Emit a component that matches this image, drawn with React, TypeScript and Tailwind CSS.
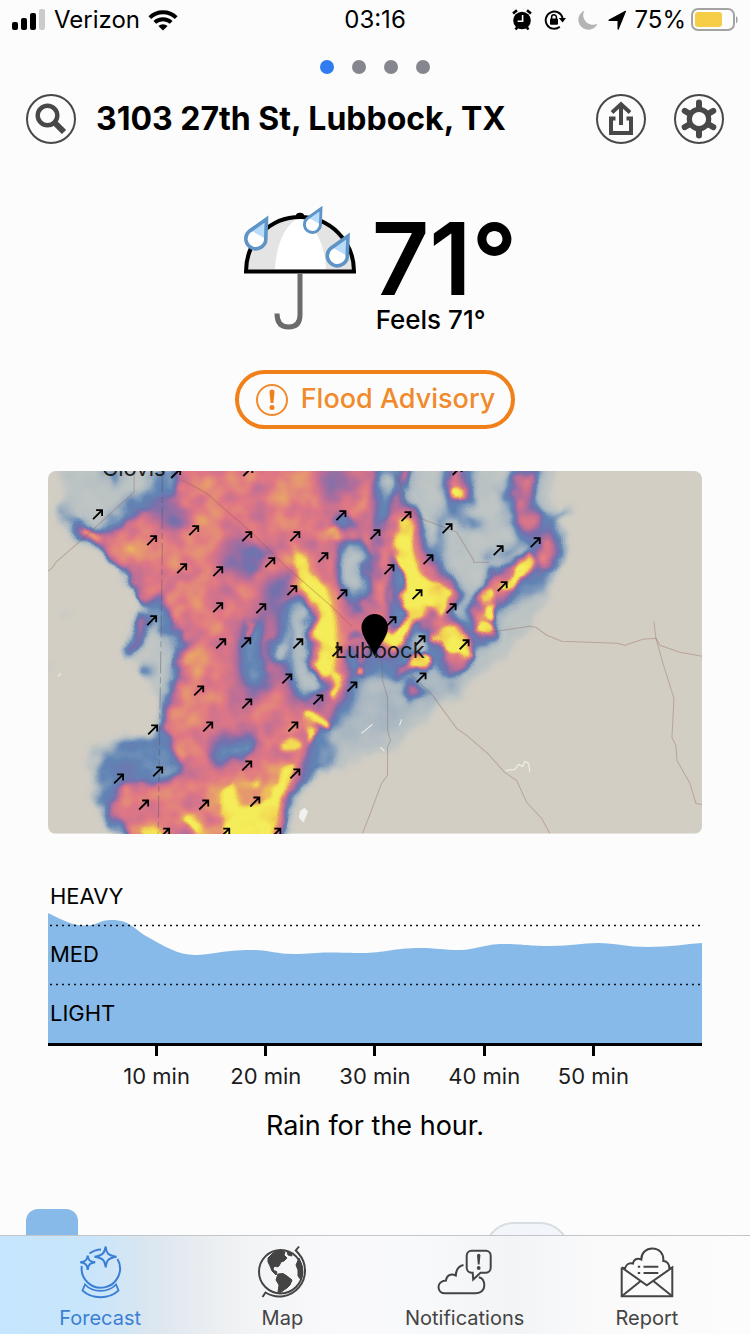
import React from 'react';

const arrows: [number, number][] = [
  [50, 43], [128, 2], [200, 0], [104, 69], [146, 59], [199, 65], [247, 65], [293, 44], [327, 63],
  [134, 97], [170, 100], [222, 91], [275, 86], [244, 119], [294, 123], [104, 149], [170, 136],
  [213, 137], [173, 172], [198, 171], [250, 172], [289, 180], [239, 207], [304, 215], [151, 219],
  [199, 232], [270, 228], [105, 258], [160, 255], [245, 255], [199, 294], [247, 302], [71, 307],
  [110, 300], [207, 330], [96, 333], [156, 333], [117, 361], [177, 361], [228, 361], [358, 45],
  [399, 57], [450, 79], [487, 71], [380, 88], [341, 98], [454, 115], [369, 123], [403, 137],
  [343, 150], [372, 169], [416, 173], [373, 206], [409, -1],
];

const roads = [
  'M441 161L454 159L481 155L487 156L498 164L513 170L568 172L576 174L594 168L607 167L611 174L631 181L653 185',
  'M605 150L607 167L614 192L625 227L623 266L627 274L628 289L641 312L647 332L653 333',
  'M361 202L384 224L408 257L418 264L439 282L456 301L468 309L478 331L493 347L501 362',
  'M333 189L334 209L339 226L339 259L342 269L339 276L339 304L333 312L321 344L314 362',
  'M0 100L4 97L8 91L31 71L86 21L86 2',
  'M134 9L158 22L204 62L238 96L284 136L304 156',
  'M346 0L354 19L357 32L371 47L408 61L425 89V91H441',
];

const minutes = [10, 20, 30, 40, 50];

const StatusBar: React.FC = () => (
  <div className="grid h-10 grid-cols-[1fr_auto_1fr] items-center px-3 text-2xl text-black">
    <div className="flex items-center gap-2">
      <svg width="34" height="22" viewBox="0 0 34 22">
        <rect x="0" y="13" width="6" height="8" rx="2" />
        <rect x="9" y="9" width="6" height="12" rx="2" />
        <rect x="18" y="4" width="6" height="17" rx="2" />
        <rect x="27" y="0" width="6" height="21" rx="2" fill="#cbcbcb" />
      </svg>
      <span>Verizon</span>
      <svg width="30" height="22" viewBox="0 0 30 22" fill="none" stroke="#000" strokeWidth="4">
        <path d="M1.8 8.6a19 19 0 0 1 26.4 0" />
        <path d="M6.8 13.4a12 12 0 0 1 16.4 0" />
        <path d="M15 21.5l-4.6-4.6a7 7 0 0 1 9.2 0z" fill="#000" stroke="none" />
      </svg>
    </div>
    <span>03:16</span>
    <div className="flex items-center justify-end">
      <svg className="mr-3" width="20" height="22" viewBox="0 0 20 22">
        <circle cx="10" cy="11.5" r="8.8" />
        <path d="M1 4.5L5 1.2M19 4.5L15 1.2M3.5 20.5l2-2.5M16.5 20.5l-2-2.5" stroke="#000" strokeWidth="2.6" />
        <path d="M10.6 6v6.2H5.6" stroke="#fff" strokeWidth="1.6" fill="none" />
      </svg>
      <svg className="mr-3" width="22" height="22" viewBox="0 0 22 22">
        <path d="M15.8 17.8A8.6 8.6 0 1 1 18.6 9" fill="none" stroke="#000" strokeWidth="1.9" />
        <path d="M14.8 9h7.2l-3.4 4.6z" />
        <rect x="6" y="9.5" width="8" height="6.2" rx="1" />
        <path d="M7.6 10V8.2a2.4 2.4 0 0 1 4.8 0V10" fill="none" stroke="#000" strokeWidth="1.5" />
      </svg>
      <svg className="mr-2" width="20" height="22" viewBox="0 0 20 22">
        <path d="M6.5 1.5A10 10 0 1 0 19.6 14.6 9.6 9.6 0 0 1 6.5 1.5z" fill="#b4b4b4" />
      </svg>
      <svg className="mr-[6px]" width="22" height="22" viewBox="0 0 22 22">
        <path d="M20 2.4L12.8 20.2c-.4.9-1.3.7-1.3-.2V11.9H3.2c-1 0-1.2-1-.2-1.4L18.8 2c.8-.4 1.5-.2 1.2.4z" />
      </svg>
      <span>75%</span>
      <svg className="ml-1" width="48" height="24" viewBox="0 0 48 24">
        <rect x="2" y="1" width="42" height="21" rx="6" fill="none" stroke="#a3a3a3" strokeWidth="2" />
        <rect x="5" y="4" width="27" height="15" rx="3" fill="#f6cd47" />
        <path d="M46 8v7.500c2.200-1.400 2.200-6.100 0-7.500z" fill="#a3a3a3" />
      </svg>
    </div>
  </div>
);

const Header: React.FC = () => (
  <header className="flex h-[50px] items-center px-[26px]">
    <button aria-label="Search" className="flex size-[50px] shrink-0 items-center justify-center rounded-full border-2 border-[#484848]">
      <svg width="32" height="32" viewBox="0 0 32 32" fill="none" stroke="#484848">
        <circle cx="12.500" cy="12.500" r="9.800" strokeWidth="4.400" />
        <path d="M20 20l9 9" strokeWidth="6" />
      </svg>
    </button>
    <h1 className="ml-5 flex-1 truncate text-[32px] font-bold leading-10">3103 27th St, Lubbock, TX</h1>
    <div className="flex gap-7">
      <button aria-label="Share" className="flex size-[50px] items-center justify-center rounded-full border-2 border-[#484848]">
        <svg width="30" height="38" viewBox="0 0 30 38" fill="none" stroke="#484848" strokeWidth="4">
          <path d="M9.500 18.500H5V33H25V18.500H20.500" />
          <path d="M15 25V5" />
          <path d="M6 12.500L15 4L24 12.500" strokeWidth="3.800" />
        </svg>
      </button>
      <button aria-label="Settings" className="flex size-[50px] items-center justify-center rounded-full border-2 border-[#484848]">
        <svg width="40" height="40" viewBox="0 0 40 40" fill="none" stroke="#484848">
          <circle cx="20" cy="20" r="9.700" strokeWidth="5.200" />
          <path
            d="M20 8.500V3.500M20 31.500V36.500M10 14.300L5.700 11.800M30 25.700L34.300 28.200M10 25.700L5.700 28.200M30 14.300L34.300 11.800"
            strokeWidth="6"
            strokeLinecap="round"
          />
        </svg>
      </button>
    </div>
  </header>
);

const Drop: React.FC<{ x: number; y: number; scale: number }> = ({ x, y, scale }) => (
  <g transform={`translate(${x} ${y}) scale(${scale})`}>
    <path d="M22.500 2L21.800 21A10 10 0 1 1 5 14.500Z" fill="#fff" />
    <path d="M22.500 2L21.800 22L7 13.500Z" fill="#b9dcfb" />
    <path d="M22.500 2L21.800 21A10 10 0 1 1 5 14.500Z" fill="none" stroke="#5f94c6" strokeWidth="3.600" />
  </g>
);

const Umbrella: React.FC = () => (
  <svg width="118" height="126" viewBox="0 0 118 126">
    <path d="M4 65a54 54 0 0 1 108 0z" fill="#e4e4e4" />
    <path d="M33 63C34 40 42 20 56 12H60C74 20 83 40 84 63z" fill="#fff" />
    <path d="M4 65.500C4 35 28 11 58 11s54 24 54 54.500z" fill="none" stroke="#000" strokeWidth="4" />
    <ellipse cx="58" cy="9.500" rx="4" ry="2.800" />
    <path d="M58 67.500V109c0 8-4 12-11.500 12S35 117 35 107.500" fill="none" stroke="#6b6b6b" strokeWidth="5" />
    <Drop x={2} y={11} scale={1} />
    <Drop x={61} y={1} scale={0.8} />
    <Drop x={83.500} y={28} scale={1} />
  </svg>
);

const RadarMap: React.FC = () => (
  <svg className="block h-auto w-full rounded-lg" viewBox="0 0 653 362">
    <defs>
      {/* grey levels are rain intensity, the filter turns them into the radar colours */}
      <filter id="radar" x="0" y="0" width="653" height="362" filterUnits="userSpaceOnUse" colorInterpolationFilters="sRGB">
        <feTurbulence type="fractalNoise" baseFrequency="0.045" numOctaves="2" seed="7" result="noise" />
        <feDisplacementMap in="SourceGraphic" in2="noise" scale="14" xChannelSelector="R" yChannelSelector="G" result="moved" />
        <feColorMatrix in="noise" values="1 0 0 0 0  1 0 0 0 0  1 0 0 0 0  0 0 0 0 1" result="grey" />
        <feComposite in="moved" in2="grey" operator="arithmetic" k1="0.4" k2="0.8" />
        <feColorMatrix values="1 0 0 0 0  1 0 0 0 0  1 0 0 0 0  1 0 0 0 0" />
        <feComponentTransfer>
          <feFuncR type="table" tableValues="0.72 0.72 0.70 0.60 0.38 0.46 0.72 0.88 0.91 0.95 0.96" />
          <feFuncG type="table" tableValues="0.76 0.76 0.75 0.68 0.52 0.44 0.43 0.47 0.62 0.84 0.93" />
          <feFuncB type="table" tableValues="0.78 0.78 0.77 0.75 0.71 0.68 0.60 0.52 0.42 0.32 0.35" />
          <feFuncA type="table" tableValues="0 0.15 0.65 0.85 1 1 1 1 1 1 1" />
        </feComponentTransfer>
      </filter>
      <filter id="b2" x="-20%" y="-20%" width="140%" height="140%"><feGaussianBlur stdDeviation="2" /></filter>
      <filter id="b4" x="-20%" y="-20%" width="140%" height="140%"><feGaussianBlur stdDeviation="4" /></filter>
      <filter id="b8" x="-40%" y="-40%" width="180%" height="180%"><feGaussianBlur stdDeviation="8" /></filter>
    </defs>
    <rect width="653" height="362" fill="#d3cec4" />
    <g filter="url(#radar)">
      <rect x="-20" y="-20" width="693" height="402" fill="#000" />
      {/* drizzle */}
      <g filter="url(#b4)" fill="#343434">
        <path d="M10 -10L14 40L60 60L130 30V-10z" />
        <path d="M100 120L92 200L120 250L140 200V120z" />
        <path d="M300 -10H510L505 20L512 65L500 130L478 165L440 200L415 225L385 245L350 275L320 285L296 300L276 290L290 240z" />
        <path d="M40 270L100 260L130 310L70 362H62L42 330z" />
        <circle cx="18" cy="143" r="6" />
        <circle cx="2" cy="197" r="6" />
      </g>
      <g filter="url(#b8)" fill="#464646">
        <path d="M300 215L390 205L440 185L380 235L330 265L285 275z" />
      </g>
      {/* light rain */}
      <g filter="url(#b4)" fill="#666" stroke="#666" strokeLinejoin="round" strokeLinecap="round">
        <path
          d="M112 0L96 22L80 32L66 48L50 60L40 54L22 48L14 34L20 60L50 76L71 98L91 118L99 136L108 150L122 170L132 190L122 216L116 240L108 262L75 276L54 282L52 300L55 345L72 362H236L246 322L266 304L272 268L300 240L312 206L345 200L350 -10z"
          strokeWidth="7"
        />
        <path d="M52 -4L66 18L76 0z" />
        <path d="M95 145L82 180" strokeWidth="16" />
        <circle cx="98" cy="199" r="8" />
        <path d="M330 0L350 10L366 60L385 90L405 115L400 140L425 170L410 192L380 196L362 205L330 200z" strokeWidth="9" />
        <path d="M410 -4L408 24M475 4L468 24L484 60M498 66V84L480 110L454 120L436 130L431 160" strokeWidth="34" fill="none" />
        <path d="M391 50V92M371 218L378 222M505 48L520 38M440 84L470 76M400 44L432 54" strokeWidth="10" fill="none" />
        <ellipse cx="402" cy="214" rx="6" ry="4" />
        <ellipse cx="272" cy="282" rx="16" ry="20" />
      </g>
      {/* steady rain */}
      <g filter="url(#b4)" fill="#b0b0b0" stroke="#b0b0b0" strokeLinejoin="round" strokeLinecap="round">
        <path
          d="M132 -10L126 26L101 40L76 54L61 65L41 60L25 51L32 63L54 76L74 98L92 117L99 130L108 121L118 131L128 152L140 170L137 192L128 218L123 238L118 258L128 272L132 300L114 312L83 312L68 326L60 340L74 349L78 372H226L234 326L252 306L262 262L284 240L294 226L300 200L316 186L322 150L326 -10z"
          strokeWidth="3"
        />
        <path d="M96 150L86 176" strokeWidth="7" />
        <path d="M356 44L340 64L334 110L332 150L340 176" strokeWidth="17" fill="none" />
        <path d="M356 48L366 90L385 112L400 124L378 140L394 156L412 178L406 190" strokeWidth="25" fill="none" />
        <path d="M368 191L352 198M358 -4V10M346 24V34" strokeWidth="10" fill="none" />
        <path d="M409 -4V8L405 22M409 8L417 24" strokeWidth="9" fill="none" />
        <path d="M466 12L484 4L474 34zM473 42L490 46L482 58z" strokeWidth="9" />
        <path d="M498 70V88M480 92L446 108L456 118L434 128L436 162" strokeWidth="17" fill="none" />
        <circle cx="364" cy="222" r="7" />
      </g>
      {/* breaks in the rain */}
      <g filter="url(#b8)" fill="#7d7d7d">
        <ellipse cx="194" cy="88" rx="22" ry="18" />
        <ellipse cx="205" cy="190" rx="15" ry="42" />
        <ellipse cx="184" cy="272" rx="28" ry="14" transform="rotate(-25 184 272)" />
        <ellipse cx="286" cy="10" rx="16" ry="14" />
        <ellipse cx="228" cy="128" rx="14" ry="26" />
        <ellipse cx="122" cy="44" rx="20" ry="12" />
        <path d="M236 130H262L268 225L300 226L262 240L236 212z" />
      </g>
      <g filter="url(#b4)" fill="#626262">
        <ellipse cx="205" cy="182" rx="12" ry="34" />
        <ellipse cx="184" cy="278" rx="22" ry="9" transform="rotate(-20 184 278)" />
        <path d="M240 128L258 128L264 160L270 222L248 224L240 200L226 175z" />
        <path d="M290 72L316 68L322 126L302 138L290 110z" />
        <ellipse cx="293" cy="50" rx="8" ry="8" />
        <ellipse cx="108" cy="296" rx="20" ry="12" />
        <ellipse cx="304" cy="188" rx="8" ry="12" />
      </g>
      <g filter="url(#b4)" fill="#343434">
        <path d="M246 136H254L258 168L264 218L252 220L248 180z" stroke="#343434" strokeWidth="2" />
        <ellipse cx="304" cy="98" rx="10" ry="23" />
        <ellipse cx="230" cy="178" rx="6" ry="10" />
        <ellipse cx="338" cy="12" rx="7" ry="9" />
        <ellipse cx="122" cy="180" rx="6" ry="14" />
        <ellipse cx="372" cy="172" rx="7" ry="9" />
      </g>
      <g filter="url(#b2)" fill="#858585">
        <ellipse cx="344" cy="124" rx="5" ry="10" />
        <circle cx="307" cy="166" r="6" />
      </g>
      {/* heavier */}
      <g filter="url(#b8)" fill="#c4c4c4">
        <ellipse cx="158" cy="35" rx="16" ry="16" />
        <ellipse cx="92" cy="80" rx="24" ry="12" />
        <ellipse cx="138" cy="238" rx="17" ry="20" />
        <ellipse cx="146" cy="105" rx="11" ry="56" />
        <ellipse cx="152" cy="190" rx="14" ry="24" />
        <ellipse cx="247" cy="16" rx="20" ry="12" />
        <ellipse cx="147" cy="290" rx="8" ry="20" />
        <ellipse cx="214" cy="12" rx="10" ry="8" />
      </g>
      <g filter="url(#b2)" fill="#d0d0d0" stroke="#d0d0d0" strokeLinecap="round">
        <path d="M34 57L50 67" strokeWidth="5" />
        <circle cx="286" cy="64" r="6" />
        <circle cx="312" cy="200" r="4" />
        <path d="M204 152L198 166" strokeWidth="4" />
      </g>
      {/* downpour */}
      <g filter="url(#b4)" fill="#ccc" stroke="#ccc" strokeLinejoin="round" strokeLinecap="round">
        <path d="M246 80L258 86L262 104L282 118L290 160L284 208L272 204L268 128L250 106z" strokeWidth="8" />
        <path d="M168 318L240 296L226 364H160z" strokeWidth="8" />
        <path d="M142 340L152 362M84 362H116" strokeWidth="14" />
      </g>
      <g filter="url(#b2)" fill="#fff" stroke="#fff" strokeLinejoin="round" strokeLinecap="round">
        <path d="M246 84L256 84L258 100L276 116L284 146L288 170L282 204L274 206L272 170L269 128L252 106z" strokeWidth="3" />
        <path d="M288 206L284 222M262 244L278 250M262 262V258M236 276L248 270" strokeWidth="8" fill="none" />
        <path d="M172 322L184 316L190 338L208 336L226 326L236 300L246 296L234 322L226 340L222 372H184L172 345z" strokeWidth="2" />
        <path d="M206 310V311M142 346L150 358M96 361H110" strokeWidth="7" fill="none" />
        <path d="M356 50L345 68L354 90L362 112L356 138L360 152L370 142L376 130L392 138L400 120L386 112L372 108L362 80L360 60z" strokeWidth="6" />
        <path d="M338 168L346 172L356 158M364 190L376 191" strokeWidth="13" fill="none" />
        <path d="M390 164L402 158L418 182L398 176z" strokeWidth="8" />
        <path d="M409 22V23M478 90L472 100M466 108L460 112M432 126L440 124M442 138V142M435 160L438 156" strokeWidth="11" fill="none" />
      </g>
    </g>
    <g fill="none" stroke="#8a5a50" strokeOpacity="0.35">
      {roads.map((d) => (
        <path key={d} d={d} />
      ))}
    </g>
    <path d="M114 0V89L110 362" fill="none" stroke="#4b4b5f" strokeOpacity="0.4" strokeDasharray="22 4 6 4" />
    <g fill="none" stroke="#f1f1ee">
      <path d="M457 299L466 298L470 293L474 295L476 290L480 292L481 301" />
      <path d="M313 262L324 253M351 254L353 248M332 276L336 280M10 205L13 202" />
      <path d="M252 340L256 337L259 340L255 350L251 346z" fill="#f1f1ee" />
    </g>
    <g fill="none" stroke="#000" strokeWidth="1.800">
      {arrows.map(([x, y]) => (
        <path key={`${x}-${y}`} d={`M${x - 5} ${y + 5}L${x + 4} ${y - 4}M${x - 2} ${y - 4}H${x + 4}V${y + 2}`} />
      ))}
    </g>
    <g fontSize="22" fill="#1a1a1a">
      <text x="54" y="5">Clovis</text>
      <text x="286" y="187">Lubbock</text>
    </g>
    <path d="M326 185C322 174 313 166 313 156a13.200 13.200 0 0 1 26.400 0C339.400 166 330 174 326 185z" />
  </svg>
);

const RainChart: React.FC = () => (
  <section className="mx-12 mt-[33px]">
    <div className="grid border-b-[3px] border-black">
      <svg className="col-start-1 row-start-1 h-[176px] w-full" viewBox="0 0 654 176" preserveAspectRatio="none">
        <path
          d="M0 46C16 54 24 58 36 58.500C50 59 50 53 64 53C82 53 86 62 98 69C116 79 130 88 147 88C162 88 176 83 203 83C222 83 228 87 245 87C262 87 268 85.500 280 85.500C296 85.500 302 86 314 86C336 86 346 81 372 81C388 81 396 83 410 83C430 83 434 77 456 77C474 77 480 79 502 79C524 79 534 76 550 76C568 76 578 80 600 80C622 80 638 77 654 76V176H0z"
          fill="#87bae8"
        />
        <path d="M2 58.500H654M2 117.500H654" stroke="#111" strokeWidth="1.400" strokeDasharray="2 4" />
      </svg>
      <div className="col-start-1 row-start-1 grid grid-rows-3 pl-[2px] text-[22px] leading-[58px]">
        <span>HEAVY</span>
        <span>MED</span>
        <span>LIGHT</span>
      </div>
    </div>
    <div className="grid grid-cols-5 px-[54px]">
      {minutes.map((m) => (
        <div key={m} className="flex flex-col items-center text-[22px] leading-8 text-[#1c1c1c]">
          <div className="mb-1 h-[10px] w-[3px] bg-black" />
          <span>{m} min</span>
        </div>
      ))}
    </div>
  </section>
);

const ForecastIcon: React.FC = () => (
  <svg width="48" height="56" viewBox="0 0 48 56" fill="none" stroke="currentColor" strokeWidth="2">
    <path d="M5.800 22A19.200 19.200 0 1 0 41.500 15" />
    <path d="M13.500 9.500A20 20 0 0 1 25 5.500" />
    <path d="M29.700 2.500C30.500 9.500 32 11.500 40.500 12.700C32.500 14 30.500 16 29.700 23.300C28.500 16 27 14 18.500 12.700C26.500 11.500 28.500 9.500 29.700 2.500z" />
    <path d="M11.700 11.500C12.200 16 13.700 17.700 19.200 18.300C14 19 12.300 20.500 11.700 25.800C11 20.500 9.500 19 4.200 18.300C9.500 17.700 11.200 16 11.700 11.500z" />
    <path d="M9 40.500L6.500 46.500C16 55.500 33 55.500 42.500 46.500L40 40.500C32 49 17 49 9 40.500z" strokeWidth="1.800" />
  </svg>
);

const MapIcon: React.FC = () => (
  <svg width="52" height="56" viewBox="0 0 52 56" fill="none" stroke="currentColor" strokeWidth="2">
    <circle cx="24.700" cy="27.700" r="21.700" />
    <path d="M43 2.500L39.800 6.500L42.500 9.500A25.800 25.800 0 0 1 9.500 48.500L6.500 53" />
    <path
      d="M17 9L24 6L29 8L28 11L31 14L28 17L25 18L23 22L21 23L19 22L17 24L18 27L20 27L21 29L20 31L16 27L14 22L12 18L12 14zM31 7L35 9L36 12L32 11zM22 30L27 29.500L31 32L36 36L34 41L31 44L28 46L24 49L22 48L23 41L20 36zM43 14L46 22L46.500 29L45 36L42 32L42 26L40 21z"
      fill="currentColor"
      strokeWidth="1"
    />
  </svg>
);

const NotificationsIcon: React.FC = () => (
  <svg width="56" height="56" viewBox="0 0 56 56" fill="none" stroke="currentColor" strokeWidth="2">
    <path d="M26.500 21C22 22 19 26 18.800 31.500C14 29 9.500 31.500 9 36.500C4 37 1.500 40 1.500 43C1.500 47 4.500 49.300 8 49.300H39C44 49.300 47.300 46 47.300 41.500C47.300 37 45 34 41.800 33.300" />
    <path d="M35.700 28.700H34.500A5 5 0 0 1 29.700 24V11.500A5 5 0 0 1 34.500 6.700H49A5 5 0 0 1 53.700 11.500V24A5 5 0 0 1 49 28.700H43.500L36.200 35.500z" />
    <path d="M40 11.500a1.700 1.700 0 0 1 3.400 0L42.600 20.500h-1.800z" fill="currentColor" stroke="none" />
    <circle cx="41.700" cy="24" r="1.900" fill="currentColor" stroke="none" />
  </svg>
);

const ReportIcon: React.FC = () => (
  <svg width="54" height="56" viewBox="0 0 54 56" fill="none" stroke="currentColor" strokeWidth="2">
    <path d="M1.700 23.500V52.300H52.300V23.500L26.800 41.200L1.700 23.500L5 24.500C6 20.500 9.500 18.700 13 19.500C13.500 15.500 17 13.500 21.300 15.500C21.300 9 26 4.500 32.300 4.500C39 4.500 44 9.500 43.300 17C47 17 49.500 20 49.300 24.300L52.300 23.500" />
    <path d="M2 52L20.700 37M52 52L33.300 37" />
    <path d="M23.500 22.700H38.300M23.500 29H38.300M17.800 22.700H20.200M17.800 29H20.200" />
  </svg>
);

const tabs = [
  { label: 'Forecast', icon: ForecastIcon, active: true },
  { label: 'Map', icon: MapIcon, active: false },
  { label: 'Notifications', icon: NotificationsIcon, active: false },
  { label: 'Report', icon: ReportIcon, active: false },
];

const TabBar: React.FC = () => (
  <nav className="border-t border-[#c2c4c7] bg-[linear-gradient(90deg,#c5e6fe_0%,#c8e5fb_12%,#dbe6ef_20%,#ebeef1_28%,#f3f4f5_34%,#f9f9fb_44%,#f8f9fa_56%,#f2f4f6_68%,#fafafb_80%,#fcfcfc_100%)] pl-[9px] pr-3 pt-2">
    <ul className="grid grid-cols-4">
      {tabs.map(({ label, icon: Icon, active }) => (
        <li key={label}>
          <a
            href="#"
            className={`flex h-[90px] flex-col items-center gap-[2px] text-xl leading-8 ${active ? 'text-[#3b7fd4]' : 'text-[#444]'}`}
          >
            <Icon />
            <span>{label}</span>
          </a>
        </li>
      ))}
    </ul>
  </nav>
);

const App: React.FC = () => {
  return (
    <div className="flex h-dvh flex-col bg-[#fcfcfc] font-['Inter','Liberation_Sans',sans-serif] text-black">
      <StatusBar />
      <main className="min-h-0 flex-1 overflow-y-auto [scrollbar-width:none]">
        <div className="flex justify-center gap-[18px] pb-5 pt-5">
          <span className="size-[14px] rounded-full bg-[#2f7bf0]" />
          <span className="size-[14px] rounded-full bg-[#86868e]" />
          <span className="size-[14px] rounded-full bg-[#86868e]" />
          <span className="size-[14px] rounded-full bg-[#86868e]" />
        </div>
        <Header />

        <section className="mt-[62px] flex justify-center gap-3 pl-[9px]">
          <Umbrella />
          <div className="pt-2">
            <p className="text-[100px] font-semibold leading-[90px]">71°</p>
            <p className="pl-1 text-[26px] font-medium leading-8">Feels 71°</p>
          </div>
        </section>

        <div className="mt-[34px] flex justify-center">
          <button className="flex h-[59px] items-center gap-3 rounded-full border-4 border-[#f08019] px-4 text-[27px] font-medium text-[#f08a2c]">
            <svg width="34" height="34" viewBox="0 0 34 34">
              <circle cx="17" cy="17" r="15" fill="none" stroke="#f08a2c" strokeWidth="2" />
              <path d="M14.500 9a2.500 2.500 0 0 1 5 0L18.400 20h-2.800z" fill="#f0801a" />
              <circle cx="17" cy="24.500" r="2.500" fill="#f0801a" />
            </svg>
            Flood Advisory
          </button>
        </div>

        <div className="mx-12 mt-[42px]">
          <RadarMap />
        </div>

        <RainChart />
        <p className="mt-[14px] text-center text-[27px] leading-10">Rain for the hour.</p>

        <div className="mt-[63px] flex h-24 items-start px-[26px]">
          <div className="h-24 w-[52px] rounded-xl bg-[#87bae8]" />
          <div className="ml-auto mr-[154px] mt-[13px] h-[60px] w-[86px] rounded-[30px] border-2 border-[#d8dde1] bg-[#f2f6fa]" />
        </div>
      </main>
      <TabBar />
    </div>
  );
};

export default App;
